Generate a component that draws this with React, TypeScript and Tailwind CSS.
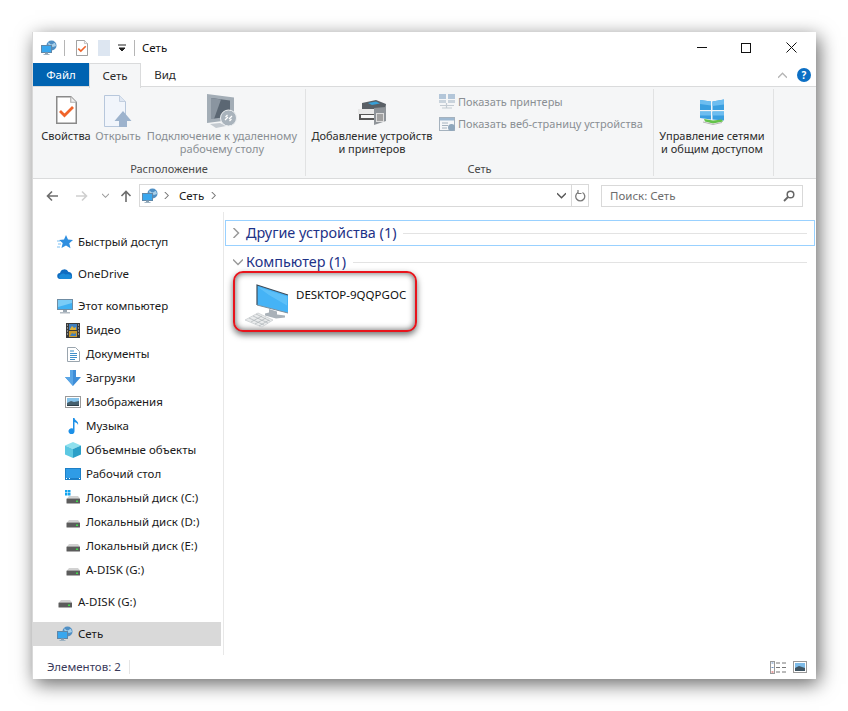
import type { ReactNode } from 'react'

const font = { fontFamily: '"Noto Sans", "Open Sans", sans-serif' }

function NetIcon({ size = 16 }: { size?: number }) {
  return (
    <svg width={size} height={size} viewBox="0 0 16 16" className="shrink-0">
      <circle cx="10.500" cy="5.500" r="5" fill="#4f8fc4" />
      <path d="M7 2.500c2 .5 2 2 3.500 2s2-2 3.500-1.500l1 3-3 1-2-1-2 1z" fill="#a9cfe8" />
      <rect x="0.500" y="5.500" width="10" height="7" fill="#39a7ee" stroke="#5f87a8" />
      <rect x="4" y="12.500" width="3" height="1.500" fill="#8aa2b4" />
      <rect x="2.500" y="14" width="6" height="1" fill="#9fb3c2" />
    </svg>
  )
}

function CheckDoc({ w = 12, h = 16 }: { w?: number; h?: number }) {
  return (
    <svg width={w} height={h} viewBox="0 0 21 28" className="shrink-0">
      <path d="M.75.75h14l5.500 5.500v21H.75z" fill="#fff" stroke="#8a8a8a" strokeWidth="1.500" />
      <path d="M14.750.75v5.500h5.500" fill="#f0f0f0" stroke="#b0b0b0" strokeWidth="1.200" />
      <path d="M4 15l4.500 4.500L17 11" fill="none" stroke="#f0642a" strokeWidth="2.800" />
    </svg>
  )
}

function OpenDoc() {
  return (
    <svg width="28" height="32" viewBox="0 0 28 32">
      <path d="M.5.500h15l6 6v25H.5z" fill="#f1f5fb" stroke="#b7c7dc" />
      <path d="M15.500.500v6h6" fill="#dfe7f2" stroke="#c3cfdf" />
      <path d="M19 16l8.500 10H23v6h-8v-6h-4.500z" fill="#9db3cd" />
    </svg>
  )
}

function RemoteIcon() {
  return (
    <svg width="32" height="36" viewBox="0 0 32 36">
      <path d="M1 1l27 3.500v22L1 30z" fill="#a3adb6" />
      <path d="M5 5l19 2.500v16L5 26z" fill="#5b6773" />
      <path d="M5 5l10 1.500L8 26H5z" fill="#8a95a0" />
      <path d="M4 31l10-1 6 3-10 2z" fill="#c4cad0" />
      <circle cx="22.500" cy="25" r="8" fill="#a9b3bc" stroke="#eef0f2" />
      <path d="M19 27l3-3M26 23l-3 3M19.500 24l2-2M25.500 26l-2 2" stroke="#fff" strokeWidth="1.200" />
    </svg>
  )
}

function PrinterIcon() {
  return (
    <svg width="29" height="26" viewBox="0 0 29 26">
      <path d="M4 3l14-3 10 4-1 8H4z" fill="#5a6066" />
      <path d="M10 3l8-1.500 4 2-8 1.500z" fill="#38a0d8" />
      <path d="M0 9h20v5H0z" fill="#e8e8e8" />
      <path d="M1 14h17v6H1z" fill="#555" />
      <path d="M3 15h13v3H3z" fill="#f7f7f7" />
      <path d="M16 8l12-1v14l-12 4z" fill="#8f9499" />
      <rect x="18" y="13" width="8" height="9" fill="#dcdcdc" />
      <path d="M20 14v7M22 14v7M24 14v7" stroke="#666" strokeWidth="1" />
    </svg>
  )
}

function ShareIcon() {
  return (
    <svg width="25" height="27" viewBox="0 0 25 27">
      <path d="M0 2l11 1.500V12H0zM12.500 3.500L24 1.500V12H12.500zM0 13.500h11v8L0 20zM12.500 13.500H24v9l-11.500-1z" fill="#3b9fe0" />
      <path d="M0 2l11 1.500v4L0 6zM12.500 3.500L24 1.500v5L12.500 8zM0 13.500h11v4H0zM12.500 13.500H24v4H12.500z" fill="#6dbdf0" />
      <path d="M4 21l9 1.500 9-1 1 2-10 2-8-2z" fill="#63c24a" />
      <path d="M3 24l10 2.500 9-2" fill="none" stroke="#b5b5b5" />
    </svg>
  )
}

function SmallTree() {
  return (
    <svg width="16" height="16" viewBox="0 0 16 16" className="shrink-0">
      <path d="M0 0h7v5H0zM9 0h7v5H9z" fill="#b3c6d9" />
      <path d="M0 6h7v3H0zM9 6h7v3H9z" fill="#c9d3dc" />
      <path d="M7.500 9v5M1 11.500h14M3 14h10" stroke="#c3cbd2" strokeWidth="1.200" />
    </svg>
  )
}

function SmallWeb() {
  return (
    <svg width="17" height="16" viewBox="0 0 17 16" className="shrink-0">
      <rect x="0.500" y="1.500" width="15" height="13" fill="#f5f7f9" stroke="#a5b2be" />
      <rect x="1" y="2" width="14" height="2.500" fill="#9fb9d1" />
      <path d="M3 7h6M3 9.500h6M3 12h5" stroke="#a5b2be" />
      <circle cx="12.500" cy="11.500" r="3.500" fill="#8fa7bc" />
    </svg>
  )
}

function Chevron({ dir, className, color = '#9a9a9a', size = 8 }: { dir: 'r' | 'd' | 'u'; className?: string; color?: string; size?: number }) {
  const d = dir === 'r' ? 'M2 0l4 4-4 4' : dir === 'd' ? 'M0 2l4 4 4-4' : 'M0 6l4-4 4 4'
  return (
    <svg width={size} height={size} viewBox="0 0 8 8" className={className}>
      <path d={d} fill="none" stroke={color} strokeWidth="1.200" />
    </svg>
  )
}

function Arrow({ color, dir }: { color: string; dir: 'l' | 'r' | 'u' }) {
  const d =
    dir === 'l' ? 'M12 6H1.500M6 1.500L1.500 6 6 10.500' : dir === 'r' ? 'M0 6h10.500M6 1.500L10.500 6 6 10.500' : 'M6 12V1.500M1.500 6L6 1.500 10.500 6'
  return (
    <svg width="12" height="12" viewBox="0 0 12 12" className="shrink-0">
      <path d={d} fill="none" stroke={color} strokeWidth="1.600" />
    </svg>
  )
}

function Star() {
  return (
    <svg width="16" height="16" viewBox="0 0 16 16">
      <path d="M9 1l2 4.500 5 .5-3.700 3.300 1.200 5L9 11.500 4.500 14l1.200-5L2 6l5-.5z" fill="#2f8fe0" />
      <path d="M0 7h3M1 10h3M0 13h3" stroke="#7cc0f2" />
    </svg>
  )
}

function Cloud() {
  return (
    <svg width="16" height="12" viewBox="0 0 16 11">
      <path d="M3.500 10.500a3 3 0 0 1-.5-6 4.500 4.500 0 0 1 8.500-1 3.500 3.500 0 0 1 3.500 3.500 3.200 3.200 0 0 1-1 3.500z" fill="#0f6cc0" />
      <path d="M3.500 10.500a2.500 2.500 0 0 1 0-4.500c2-1.500 4-1 5 0 2-.5 5-.5 6 1.500.5 1 0 2.300-1 3z" fill="#1b8ad8" />
    </svg>
  )
}

function Pc() {
  return (
    <svg width="16" height="15" viewBox="0 0 16 15">
      <rect x="0.500" y="0.500" width="15" height="10" fill="#3fb0f2" stroke="#6f8ca3" />
      <path d="M1 1h14v3L1 8z" fill="#7accf7" />
      <rect x="6" y="11" width="4" height="2" fill="#9aa7b2" />
      <rect x="3" y="13" width="10" height="1.500" fill="#b3bcc4" />
    </svg>
  )
}

function Film() {
  return (
    <svg width="14" height="15" viewBox="0 0 14 15">
      <rect width="14" height="15" fill="#3a3a3a" />
      <rect x="3" y="1" width="8" height="6" fill="#3f7fbe" />
      <rect x="3" y="8" width="8" height="6" fill="#c99a2e" />
      <path d="M4 6l2-3 2 2 2-1v3H4z" fill="#e0b23a" />
      <path d="M4 13l2-3 2 1 2-1v3H4z" fill="#3f7fbe" />
      <path d="M1 2h1M1 5h1M1 8h1M1 11h1M12 2h1M12 5h1M12 8h1M12 11h1" stroke="#ddd" />
    </svg>
  )
}

function DocsIcon() {
  return (
    <svg width="13" height="15" viewBox="0 0 13 15">
      <path d="M.5.500h8l4 4v10H.5z" fill="#fff" stroke="#9aa5ae" />
      <path d="M3 4h4M3 6.500h7M3 8.500h7M3 10.500h7M3 12.500h5" stroke="#3f8fc9" />
    </svg>
  )
}

function Down() {
  return (
    <svg width="16" height="16" viewBox="0 0 16 16">
      <path d="M5 0h6v7h5l-8 9-8-9h5z" fill="#3f8ed8" />
      <path d="M5 0h3v16l-8-9h5z" fill="#5aa6e6" />
    </svg>
  )
}

function Pics() {
  return (
    <svg width="16" height="12" viewBox="0 0 16 12">
      <rect x="0.500" y="0.500" width="15" height="11" fill="#fff" stroke="#9a9a9a" />
      <rect x="2" y="2" width="12" height="8" fill="#86c3ea" />
      <path d="M2 7l4-2 3 1 5-1v5H2z" fill="#46606e" />
      <path d="M2 9h12v1H2z" fill="#2e3f49" />
    </svg>
  )
}

function Note() {
  return (
    <svg width="11" height="16" viewBox="0 0 11 16">
      <path d="M5 0h1.500c.5 3 4.500 3 3.500 7-.5-2-2-2.500-3.500-3v9a3 3 0 1 1-1.500-2.400z" fill="#1c90e8" />
    </svg>
  )
}

function Cube() {
  return (
    <svg width="16" height="16" viewBox="0 0 16 16">
      <path d="M8 0l8 3.500-8 3.500-8-3.500z" fill="#8fe0ee" />
      <path d="M0 3.500l8 3.500v9l-8-3.500z" fill="#5cc8e2" />
      <path d="M16 3.500L8 7v9l8-3.500z" fill="#2a9fc8" />
    </svg>
  )
}

function Desk() {
  return (
    <svg width="16" height="12" viewBox="0 0 16 12">
      <rect width="16" height="12" fill="#1d7fc6" />
      <rect x="1" y="1" width="14" height="9" fill="#2f9ce6" />
      <path d="M1 10.500h1M4 10.500h1M14 10.500h1" stroke="#fff" />
    </svg>
  )
}

function Disk({ win }: { win?: boolean }) {
  return (
    <svg width="16" height="16" viewBox="0 0 16 16">
      {win && <path d="M0 0h2.500v2.500H0zM3 0h2.500v2.500H3zM0 3h2.500v2.500H0zM3 3h2.500v2.500H3z" fill="#12a4ee" />}
      <path d="M2 8.500L4 6h9l2 2.500z" fill="#d2d2d2" />
      <rect x="1.500" y="8.500" width="13.500" height="5" rx="0.500" fill="#5c5c5c" />
      <rect x="11" y="10.500" width="2" height="1.500" fill="#3fdc4a" />
    </svg>
  )
}

function BigPc() {
  return (
    <svg width="48" height="44" viewBox="0 0 48 44" className="shrink-0">
      <path d="M24 25l8 2.500v3l8 1v2l-9 1-11-3v-2l4-1z" fill="#a9b1b8" />
      <path d="M12 1l31 10v18L12 21z" fill="#45b3f6" />
      <path d="M13 3l29 9.500v9L24 11z" fill="#68c6f9" opacity="0.700" />
      <path d="M12 21V1l31 10" fill="none" stroke="#3f4d5a" strokeWidth="1.200" />
      <path d="M12 21l31 8" fill="none" stroke="#7f8f9c" />
      <path d="M0 36l13-7 15 7-11 7z" fill="#e9ebec" stroke="#c4c8cb" strokeWidth="0.700" />
      <path d="M4 34l15 7M8 32l15 7M11 30l14 7M6 38l11-6M10 40l11-6M14 42l10-6" stroke="#afb4b8" strokeWidth="0.700" />
    </svg>
  )
}

function RibbonButton({ width, label, icon, iconTop = 'pt-[8px]', disabled, className }: { width: number; label: string; icon: ReactNode; iconTop?: string; disabled?: boolean; className?: string }) {
  return (
    <div className={`flex shrink-0 flex-col items-center ${className ?? ''}`} style={{ width }}>
      <div className={`flex h-[42px] items-start justify-center ${iconTop}`}>{icon}</div>
      <div className={`whitespace-pre text-center text-[11px] leading-[13px] ${disabled ? 'text-[#8a8f94]' : 'text-[#2b2b2b]'}`}>{label}</div>
    </div>
  )
}

const navItems: { label: string; icon: ReactNode; level: 1 | 2; gap?: boolean; selected?: boolean }[] = [
  { label: 'Быстрый доступ', icon: <Star />, level: 1 },
  { label: 'OneDrive', icon: <Cloud />, level: 1, gap: true },
  { label: 'Этот компьютер', icon: <Pc />, level: 1, gap: true },
  { label: 'Видео', icon: <Film />, level: 2 },
  { label: 'Документы', icon: <DocsIcon />, level: 2 },
  { label: 'Загрузки', icon: <Down />, level: 2 },
  { label: 'Изображения', icon: <Pics />, level: 2 },
  { label: 'Музыка', icon: <Note />, level: 2 },
  { label: 'Объемные объекты', icon: <Cube />, level: 2 },
  { label: 'Рабочий стол', icon: <Desk />, level: 2 },
  { label: 'Локальный диск (C:)', icon: <Disk win />, level: 2 },
  { label: 'Локальный диск (D:)', icon: <Disk />, level: 2 },
  { label: 'Локальный диск (E:)', icon: <Disk />, level: 2 },
  { label: 'A-DISK (G:)', icon: <Disk />, level: 2 },
  { label: 'A-DISK (G:)', icon: <Disk />, level: 1, gap: true },
  { label: 'Сеть', icon: <NetIcon />, level: 1, gap: true, selected: true },
]

function NavRow({ item }: { item: (typeof navItems)[number] }) {
  return (
    <div className={`flex h-[24px] items-center ${item.gap ? 'mt-[8px]' : ''} ${item.selected ? 'bg-[#d9d9d9]' : ''}`}>
      <div className={`flex w-[16px] shrink-0 justify-center ${item.level === 1 ? 'ml-[24px] mr-[5px]' : 'ml-[32px] mr-[5px]'}`}>{item.icon}</div>
      <span className="whitespace-nowrap text-[11.500px] text-[#1a1a1a]">{item.label}</span>
    </div>
  )
}

function GroupHeader({ label, open, boxed }: { label: string; open?: boolean; boxed?: boolean }) {
  return (
    <div className={`flex items-center border ${boxed ? 'h-[26px] border-[#99d1ff]' : 'h-[20px] border-transparent'}`}>
      <div className={`flex w-[20px] shrink-0 justify-end ${open ? 'pr-[3px]' : 'pr-[5px]'}`}>
        <Chevron dir={open ? 'd' : 'r'} size={10} />
      </div>
      <span className="whitespace-nowrap text-[14.400px] text-[#1e3287]">{label}</span>
      <div className="ml-[7px] mr-[7px] h-px flex-1 bg-[#e3e3e3]" />
    </div>
  )
}

export default function App() {
  return (
    <div className="h-[711px] w-[848px] overflow-hidden bg-white pl-[32px] pt-[32px]" style={font}>
      <div className="flex h-[647px] w-[784px] flex-col border-l border-[#d8d8d8] bg-white shadow-[3px_5px_18px_rgba(0,0,0,0.6)]">
        {/* title bar */}
        <div className="flex h-[31px] shrink-0 items-center">
          <div className="ml-[8px] flex items-center">
            <NetIcon />
            <div className="ml-[7px] h-[16px] w-px bg-[#b5b5b5]" />
            <div className="ml-[11px]">
              <CheckDoc />
            </div>
            <div className="ml-[10px] h-[16px] w-[12px] bg-[#dde6f1]" />
            <svg width="8" height="8" viewBox="0 0 8 8" className="ml-[8px]">
              <path d="M0 1h8M1 4h6l-3 3z" stroke="#222" fill="#222" />
            </svg>
            <div className="ml-[8px] h-[16px] w-px bg-[#b5b5b5]" />
            <span className="ml-[7px] text-[11.500px] text-[#111]">Сеть</span>
          </div>
          <div className="ml-auto flex items-center">
            <div className="h-px w-[10px] bg-[#111]" />
            <div className="ml-[34px] h-[10px] w-[10px] border border-[#111]" />
            <svg width="11" height="11" viewBox="0 0 11 11" className="ml-[35px] mr-[19px]">
              <path d="M.5.500l10 10M10.500.500l-10 10" stroke="#111" />
            </svg>
          </div>
        </div>

        {/* tabs */}
        <div className="relative flex h-[24px] shrink-0 items-stretch">
          <div className="flex w-[56px] items-center justify-center bg-[#0063b1] text-[11.500px] text-white">Файл</div>
          <div className="relative z-10 -mb-px flex w-[52px] items-center justify-center border border-b-0 border-[#dadbdc] bg-[#f5f6f7] text-[11.500px] text-[#2b2b2b]">Сеть</div>
          <div className="flex w-[48px] items-center justify-center text-[11.500px] text-[#2b2b2b]">Вид</div>
          <div className="ml-auto flex items-center pr-[5px]">
            <Chevron dir="u" color="#b5b5b5" size={9} />
            <div className="ml-[10px] flex h-[14px] w-[14px] items-center justify-center rounded-full bg-[#0c6fc4] text-[10px] font-bold text-white">?</div>
          </div>
          <div className="absolute bottom-0 left-0 right-0 h-px bg-[#dadbdc]" />
        </div>

        {/* ribbon */}
        <div className="flex h-[92px] shrink-0 border-b border-[#dadbdc] bg-[#f5f6f7]">
          <div className="my-[2px] flex w-[273px] shrink-0 flex-col border-r border-[#e1e2e3]">
            <div className="-mt-[2px] flex h-[75px] pl-[8px]">
              <RibbonButton width={50} label="Свойства" iconTop="pt-[9px]" icon={<CheckDoc w={21} h={28} />} />
              <RibbonButton width={46} className="ml-[4px]" label="Открыть" disabled icon={<OpenDoc />} />
              <RibbonButton width={152} className="ml-[5px]" label={'Подключение к удаленному\nрабочему столу'} iconTop="pt-[6px]" disabled icon={<RemoteIcon />} />
            </div>
            <div className="text-center text-[11px] leading-[14px] text-[#4a4a4a]">Расположение</div>
          </div>
          <div className="my-[2px] flex w-[348px] shrink-0 flex-col border-r border-[#e1e2e3]">
            <div className="-mt-[2px] flex h-[75px] pl-[5px]">
              <RibbonButton width={122} label={'Добавление устройств\nи принтеров'} iconTop="pt-[13px]" icon={<PrinterIcon />} />
              <div className="ml-[6px] flex flex-col gap-[6px] pt-[7px]">
                <div className="flex h-[16px] items-center gap-[3px] text-[11px] text-[#8a8f94]">
                  <SmallTree />
                  <span className="whitespace-nowrap">Показать принтеры</span>
                </div>
                <div className="flex h-[16px] items-center gap-[2px] text-[11px] text-[#8a8f94]">
                  <SmallWeb />
                  <span className="whitespace-nowrap">Показать веб-страницу устройства</span>
                </div>
              </div>
            </div>
            <div className="text-center text-[11px] leading-[14px] text-[#4a4a4a]">Сеть</div>
          </div>
          <div className="my-[2px] w-[120px] shrink-0 border-r border-[#e1e2e3]">
            <div className="-mt-[2px] flex justify-center pr-[3px]">
              <RibbonButton width={110} label={'Управление сетями\nи общим доступом'} iconTop="pt-[11px]" icon={<ShareIcon />} />
            </div>
          </div>
        </div>

        {/* address bar */}
        <div className="flex h-[33px] shrink-0 items-center">
          <div className="ml-[13px]">
            <Arrow color="#6d6d6d" dir="l" />
          </div>
          <div className="ml-[18px]">
            <Arrow color="#cfcfcf" dir="r" />
          </div>
          <Chevron dir="d" className="ml-[14px]" color="#9a9a9a" size={7} />
          <div className="ml-[11px]">
            <Arrow color="#6d6d6d" dir="u" />
          </div>
          <div className="ml-[7px] flex h-[23px] w-[450px] items-center border border-[#d9d9d9]">
            <div className="ml-[2px]">
              <NetIcon />
            </div>
            <Chevron dir="r" className="ml-[5px]" size={7} color="#777" />
            <span className="ml-[9px] text-[11.500px] text-[#1a1a1a]">Сеть</span>
            <Chevron dir="r" className="ml-[6px]" size={7} color="#777" />
            <Chevron dir="d" className="ml-auto mr-[5px]" size={9} color="#555" />
            <div className="flex h-full w-[17px] items-center justify-center border-l border-[#d9d9d9]">
              <svg width="11" height="12" viewBox="0 0 11 12">
                <path d="M3 2.500a4.500 4.500 0 1 0 4.500 0" fill="none" stroke="#7a7a7a" strokeWidth="1.300" />
                <path d="M3 0v3.500H6.500" fill="none" stroke="#7a7a7a" strokeWidth="1.200" />
              </svg>
            </div>
          </div>
          <div className="ml-[12px] flex h-[22px] w-[202px] items-center justify-between border border-[#d9d9d9] pl-[8px] pr-[7px]">
            <span className="text-[11.500px] text-[#6d6d6d]">Поиск: Сеть</span>
            <svg width="12" height="12" viewBox="0 0 12 12">
              <circle cx="7.500" cy="4.500" r="3.300" fill="none" stroke="#666" strokeWidth="1.500" />
              <path d="M5 7L1 11" stroke="#666" strokeWidth="1.800" />
            </svg>
          </div>
        </div>

        {/* main */}
        <div className="flex min-h-0 flex-1">
          <div className="w-[191px] shrink-0 border-r border-[#e8e8e8] pr-[2px] pt-[18px]">
            {navItems.map((item) => (
              <NavRow key={item.label + item.level} item={item} />
            ))}
          </div>
          <div className="min-w-0 flex-1 pl-[1px] pr-[1px] pt-[8px]">
            <GroupHeader label="Другие устройства (1)" boxed />
            <div className="mt-[6px]">
              <GroupHeader label="Компьютер (1)" open />
            </div>
            <div className="relative ml-[8px] -mt-[1px] flex h-[61px] w-[184px] items-start rounded-[10px] border-[2px] border-[#e8141c] bg-white pl-[10px] pt-[11px] shadow-[0_3px_6px_rgba(0,0,0,0.55),inset_0_0_6px_rgba(0,0,0,0.65)]">
              <BigPc />
              <span className="ml-[3px] mt-[3px] whitespace-nowrap text-[11.500px] leading-[16px] text-[#111]">DESKTOP-9QQPGOC</span>
            </div>
          </div>
        </div>

        {/* status bar */}
        <div className="flex h-[24px] shrink-0 items-center">
          <span className="ml-[14px] w-[82px] text-[11.500px] text-[#3a3a5a]">Элементов: 2</span>
          <div className="h-[14px] w-px bg-[#e5e5e5]" />
          <div className="ml-auto flex items-center pr-[9px]">
            <svg width="16" height="13" viewBox="0 0 16 13">
              <rect x="0.500" y="0.500" width="4" height="12" fill="#fff" stroke="#999" />
              <path d="M1.500 2h2M1.500 6.500h2" stroke="#6a8fc0" />
              <path d="M1.500 11h2" stroke="#d04040" />
              <path d="M6 2h4M12 2h4M6 6.500h4M12 6.500h4M6 11h4M12 11h4" stroke="#777" />
            </svg>
            <svg width="14" height="12" viewBox="0 0 14 12" className="ml-[7px]">
              <rect x="0.500" y="0.500" width="13" height="11" fill="#fff" stroke="#999" />
              <rect x="2" y="2" width="10" height="8" fill="#7dbbe8" />
              <path d="M2 7l4-2 6 2v3H2z" fill="#3f5563" />
            </svg>
          </div>
        </div>
      </div>
    </div>
  )
}
